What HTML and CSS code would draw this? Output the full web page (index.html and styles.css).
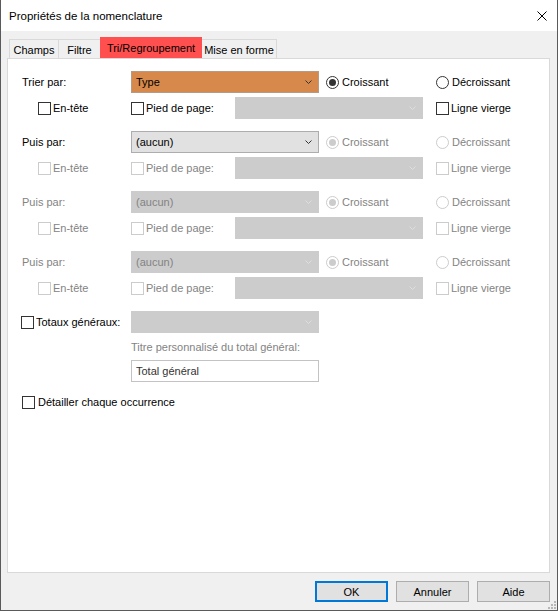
FILE: index.html
```html
<!DOCTYPE html>
<html lang="fr">
<head>
<meta charset="utf-8">
<title>Propriétés de la nomenclature</title>
<link rel="stylesheet" href="styles.css">
</head>
<body>
<div class="window">
  <div class="titlebar">
    <span class="title">Propriétés de la nomenclature</span>
    <svg class="close" width="10" height="10" viewBox="0 0 10 10"><path d="M0.5 0.5 L9.5 9.5 M9.5 0.5 L0.5 9.5" stroke="#000" stroke-width="1" fill="none"/></svg>
  </div>
  <div class="client">
    <div class="tabs">
      <div class="tab t-champs">Champs</div>
      <div class="tab t-filtre">Filtre</div>
      <div class="tab active t-tri">Tri/Regroupement</div>
      <div class="tab t-mise">Mise en forme</div>
    </div>
    <div class="panel">
      <div class="group">
        <div class="row-a">
          <span class="lbl">Trier par:</span>
          <div class="sel orange"><span class="val">Type</span><svg class="chev" width="7" height="4" viewBox="0 0 7 4"><polyline points="0.5,0.5 3.5,3.5 6.5,0.5" fill="none" stroke="#333" stroke-width="1"/></svg></div>
          <span class="opt w-cro"><span class="rb on"></span><span>Croissant</span></span>
          <span class="opt"><span class="rb"></span><span>Décroissant</span></span>
        </div>
        <div class="row-b">
          <span class="opt w-en"><span class="cb"></span><span>En-tête</span></span>
          <span class="opt w-pied"><span class="cb"></span><span>Pied de page:</span></span>
          <div class="sel disabled"><span class="val"></span><svg class="chev" width="7" height="4" viewBox="0 0 7 4"><polyline points="0.5,0.5 3.5,3.5 6.5,0.5" fill="none" stroke="#dedede" stroke-width="1"/></svg></div>
          <span class="opt ligne"><span class="cb"></span><span>Ligne vierge</span></span>
        </div>
      </div>

      <div class="group">
        <div class="row-a">
          <span class="lbl">Puis par:</span>
          <div class="sel enabled"><span class="val">(aucun)</span><svg class="chev" width="7" height="4" viewBox="0 0 7 4"><polyline points="0.5,0.5 3.5,3.5 6.5,0.5" fill="none" stroke="#333" stroke-width="1"/></svg></div>
          <span class="opt w-cro dis"><span class="rb on dis"></span><span>Croissant</span></span>
          <span class="opt dis"><span class="rb dis"></span><span>Décroissant</span></span>
        </div>
        <div class="row-b">
          <span class="opt w-en dis"><span class="cb dis"></span><span>En-tête</span></span>
          <span class="opt w-pied dis"><span class="cb dis"></span><span>Pied de page:</span></span>
          <div class="sel disabled"><span class="val"></span><svg class="chev" width="7" height="4" viewBox="0 0 7 4"><polyline points="0.5,0.5 3.5,3.5 6.5,0.5" fill="none" stroke="#dedede" stroke-width="1"/></svg></div>
          <span class="opt ligne dis"><span class="cb dis"></span><span>Ligne vierge</span></span>
        </div>
      </div>

      <div class="group">
        <div class="row-a">
          <span class="lbl dis">Puis par:</span>
          <div class="sel disabled"><span class="val">(aucun)</span><svg class="chev" width="7" height="4" viewBox="0 0 7 4"><polyline points="0.5,0.5 3.5,3.5 6.5,0.5" fill="none" stroke="#dedede" stroke-width="1"/></svg></div>
          <span class="opt w-cro dis"><span class="rb on dis"></span><span>Croissant</span></span>
          <span class="opt dis"><span class="rb dis"></span><span>Décroissant</span></span>
        </div>
        <div class="row-b">
          <span class="opt w-en dis"><span class="cb dis"></span><span>En-tête</span></span>
          <span class="opt w-pied dis"><span class="cb dis"></span><span>Pied de page:</span></span>
          <div class="sel disabled"><span class="val"></span><svg class="chev" width="7" height="4" viewBox="0 0 7 4"><polyline points="0.5,0.5 3.5,3.5 6.5,0.5" fill="none" stroke="#dedede" stroke-width="1"/></svg></div>
          <span class="opt ligne dis"><span class="cb dis"></span><span>Ligne vierge</span></span>
        </div>
      </div>

      <div class="group">
        <div class="row-a">
          <span class="lbl dis">Puis par:</span>
          <div class="sel disabled"><span class="val">(aucun)</span><svg class="chev" width="7" height="4" viewBox="0 0 7 4"><polyline points="0.5,0.5 3.5,3.5 6.5,0.5" fill="none" stroke="#dedede" stroke-width="1"/></svg></div>
          <span class="opt w-cro dis"><span class="rb on dis"></span><span>Croissant</span></span>
          <span class="opt dis"><span class="rb dis"></span><span>Décroissant</span></span>
        </div>
        <div class="row-b">
          <span class="opt w-en dis"><span class="cb dis"></span><span>En-tête</span></span>
          <span class="opt w-pied dis"><span class="cb dis"></span><span>Pied de page:</span></span>
          <div class="sel disabled"><span class="val"></span><svg class="chev" width="7" height="4" viewBox="0 0 7 4"><polyline points="0.5,0.5 3.5,3.5 6.5,0.5" fill="none" stroke="#dedede" stroke-width="1"/></svg></div>
          <span class="opt ligne dis"><span class="cb dis"></span><span>Ligne vierge</span></span>
        </div>
      </div>

      <div class="totaux">
        <span class="opt w-tot"><span class="cb"></span><span>Totaux généraux:</span></span>
        <div class="sel disabled"><span class="val"></span><svg class="chev" width="7" height="4" viewBox="0 0 7 4"><polyline points="0.5,0.5 3.5,3.5 6.5,0.5" fill="none" stroke="#dedede" stroke-width="1"/></svg></div>
      </div>
      <div class="titre dis">Titre personnalisé du total général:</div>
      <div class="input">Total général</div>
      <div class="detail"><span class="opt"><span class="cb"></span><span>Détailler chaque occurrence</span></span></div>
    </div>
    <div class="buttons">
      <div class="btn default">OK</div>
      <div class="btn">Annuler</div>
      <div class="btn">Aide</div>
    </div>
  </div>
  <svg class="grip" width="8" height="8" viewBox="0 0 8 8">
    <rect x="6" y="0" width="2" height="2" fill="#b8b8b8"/>
    <rect x="3" y="3" width="2" height="2" fill="#b8b8b8"/>
    <rect x="6" y="3" width="2" height="2" fill="#b8b8b8"/>
    <rect x="0" y="6" width="2" height="2" fill="#b8b8b8"/>
    <rect x="3" y="6" width="2" height="2" fill="#b8b8b8"/>
    <rect x="6" y="6" width="2" height="2" fill="#b8b8b8"/>
  </svg>
</div>
</body>
</html>
```
FILE: styles.css
```css
* { box-sizing: border-box; }
html, body { margin: 0; padding: 0; background: #f0f0f0; }
body {
  font-family: "Liberation Sans", Arial, sans-serif;
  font-size: 11px;
  color: #000;
}
.window {
  position: relative;
  width: 558px;
  height: 611px;
  background: #f0f0f0;
  border-left: 1px solid #5a5a5a;
  border-right: 1px solid #5a5a5a;
  border-bottom: 1px solid #5a5a5a;
}
.titlebar {
  height: 31px;
  background: #fff;
  display: flex;
  align-items: center;
  justify-content: space-between;
  padding-left: 8px;
  padding-right: 10px;
}
.title { font-size: 11.5px; color: #000; }
.close { display: block; margin-top: 0; }

.client { padding: 0 7px 0 6px; }

.tabs {
  display: flex;
  align-items: flex-end;
  height: 27px;
  padding-top: 6px;
  padding-left: 2px;
}
.tab {
  height: 19px;
  border: 1px solid #d9d9d9;
  border-bottom: none;
  background: #f0f0f0;
  display: flex;
  align-items: center;
  justify-content: center;
  margin-right: -1px;
  padding-top: 1px;
}
.t-champs { width: 50px; }
.t-filtre { width: 43px; }
.t-tri { width: 102px; }
.t-mise { width: 76px; }
.tab.active {
  height: 21px;
  background: #ff4f4f;
  border-color: #ff4f4f;
  position: relative;
  z-index: 1;
  padding-top: 0;
  padding-bottom: 1px;
}

.panel {
  width: 543px;
  height: 515px;
  background: #fff;
  border: 1px solid #d9d9d9;
  padding: 12px 0 0 14px;
}
.group { margin-bottom: 12px; }
.row-a, .row-b, .totaux {
  display: flex;
  align-items: center;
  height: 22px;
}
.row-b { margin-top: 4px; padding-left: 16px; }
.lbl { width: 109px; }
.dis { color: #838383; }

.sel {
  width: 188px;
  height: 22px;
  display: flex;
  align-items: center;
  justify-content: space-between;
  padding: 0 6px 0 4px;
  border: 1px solid #adadad;
  background: #e1e1e1;
}
.sel.orange { background: #d6894a; border-color: #b59a84; }
.sel.disabled { background: #cccccc; border-color: #cccccc; color: #838383; }
.sel.enabled { background: #e1e1e1; }
.chev { display: block; }

.opt { display: flex; align-items: center; white-space: nowrap; }
.w-cro { width: 110px; margin-left: 7px; }
.w-en { width: 93px; }
.w-pied { width: 104px; }
.ligne { margin-left: 13px; }
.w-tot { width: 110px; margin-left: -1px; }

.cb {
  width: 13px;
  height: 13px;
  border: 1px solid #333;
  background: #fff;
  margin-right: 2px;
  flex: none;
}
.cb.dis { border-color: #cccccc; }
.rb {
  width: 13px;
  height: 13px;
  border: 1px solid #333;
  border-radius: 50%;
  background: #fff;
  margin-right: 3px;
  flex: none;
  display: flex;
  align-items: center;
  justify-content: center;
}
.rb.on::after {
  content: "";
  width: 7px;
  height: 7px;
  border-radius: 50%;
  background: #333;
}
.rb.dis { border-color: #cccccc; }
.rb.on.dis::after { background: #cccccc; }

.totaux { margin-top: 3px; }
.titre {
  margin-left: 109px;
  margin-top: 7px;
  height: 14px;
  line-height: 14px;
}
.input {
  margin-left: 109px;
  margin-top: 6px;
  width: 188px;
  height: 22px;
  border: 1px solid #c3c3c3;
  padding-left: 4px;
  display: flex;
  align-items: center;
  color: #333;
}
.detail { margin-top: 13px; height: 14px; display: flex; align-items: center; }
.detail .cb { margin-right: 3px; }

.buttons {
  display: flex;
  justify-content: flex-end;
  gap: 8px;
  margin-top: 8px;
}
.btn {
  width: 73px;
  height: 21px;
  background: #e1e1e1;
  border: 1px solid #adadad;
  display: flex;
  align-items: center;
  justify-content: center;
}
.btn.default { border: 2px solid #0078d7; }
.grip { position: absolute; right: 1px; bottom: 1px; display: block; }
```
